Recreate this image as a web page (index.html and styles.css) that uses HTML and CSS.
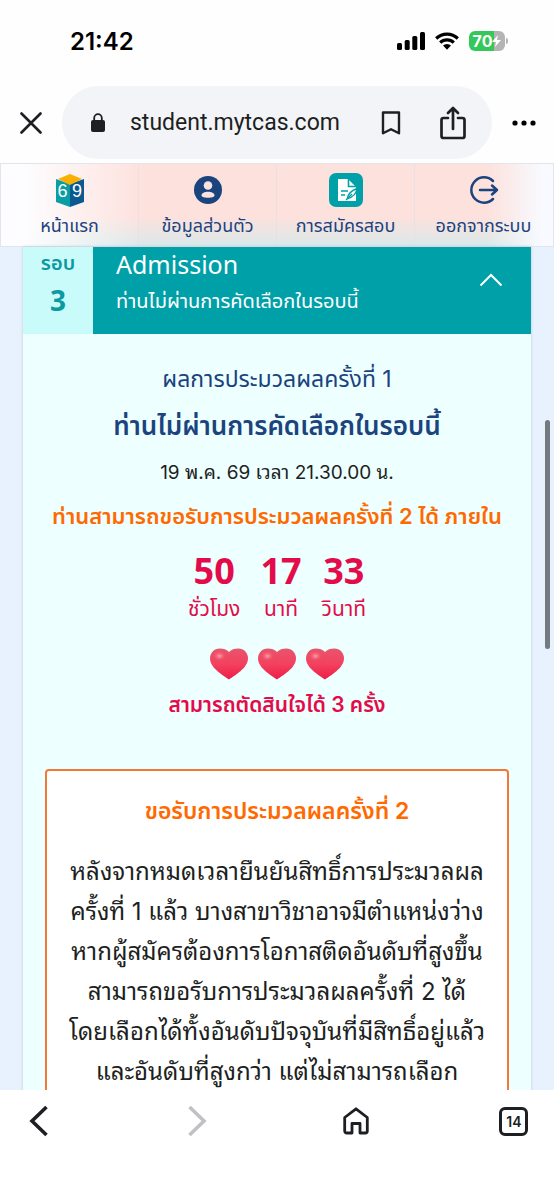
FILE: index.html
```html
<!DOCTYPE html>
<html lang="th">
<head>
<meta charset="utf-8">
<meta name="viewport" content="width=device-width, initial-scale=1">
<title>student.mytcas.com</title>
<link rel="stylesheet" href="styles.css">
</head>
<body>
<div class="app">
  <header class="chrome">
    <div class="status">
      <time class="clock">21:42</time>
      <div class="status-icons">
        <svg width="28" height="18" viewBox="0 0 28 18" aria-hidden="true"><rect x="0" y="11" width="5" height="7" rx="1.5"/><rect x="7.700" y="8" width="5" height="10" rx="1.500"/><rect x="15.300" y="4" width="5" height="14" rx="1.500"/><rect x="23" y="0" width="5" height="18" rx="1.500"/></svg>
        <svg width="24" height="18" viewBox="0 0 24 18" aria-hidden="true"><g fill="none" stroke="#000" stroke-width="3.200"><path d="M1.200 6.500a15.500 15.500 0 0 1 21.600 0"/><path d="M5.200 10.700a9.700 9.700 0 0 1 13.600 0"/></g><path d="M8 13.600a5.700 5.700 0 0 1 8 0L12 17.800z"/></svg>
        <div class="battery">
          <span class="battery-body"><span>70</span><svg width="9" height="12" viewBox="0 0 9 12" aria-hidden="true"><path fill="#fff" d="M6 0 0 7h4L3 12l6-7H5z"/></svg></span>
          <span class="battery-tip"></span>
        </div>
      </div>
    </div>
    <div class="toolbar">
      <button class="tool" aria-label="Close"><svg width="22" height="22" viewBox="0 0 22 22"><path d="M1.500 1.500l19 19M20.500 1.500l-19 19" fill="none" stroke="#1d1f22" stroke-width="2.600" stroke-linecap="round"/></svg></button>
      <div class="address">
        <svg width="16" height="20" viewBox="0 0 16 20" aria-hidden="true"><rect x="1" y="7" width="14" height="12" rx="2" fill="#1d1f22"/><path d="M4.200 8V5a3.800 3.800 0 0 1 7.600 0v3" fill="none" stroke="#1d1f22" stroke-width="1.800"/></svg>
        <span class="url">student.mytcas.com</span>
        <button class="tool" aria-label="Bookmark"><svg width="20" height="24" viewBox="0 0 20 24"><path d="M2 1.500h16v20.700l-8-4-8 4z" fill="none" stroke="#1d1f22" stroke-width="2.400" stroke-linejoin="round"/></svg></button>
        <button class="tool" aria-label="Share"><svg width="26" height="34" viewBox="0 0 26 34"><g fill="none" stroke="#1d1f22" stroke-width="2.700" stroke-linecap="round" stroke-linejoin="round"><path d="M8 12H3.500A2 2 0 0 0 1.500 14v16a2 2 0 0 0 2 2h19a2 2 0 0 0 2-2V14a2 2 0 0 0-2-2H18M13 23V3M8 7l5-5 5 5"/></g></svg></button>
      </div>
      <button class="tool" aria-label="More"><svg width="24" height="6" viewBox="0 0 24 6"><circle cx="3" cy="3" r="2.600"/><circle cx="12" cy="3" r="2.600"/><circle cx="21" cy="3" r="2.600"/></svg></button>
    </div>
  </header>

  <div class="viewport">
    <nav class="nav">
      <a class="nav-item" href="#home">
        <svg width="34" height="34" viewBox="0 0 34 34" aria-hidden="true"><path fill="#089ea3" d="M3 6l14 5v23l-14-5z"/><path fill="#0b5990" d="M31 6l-14 5v23l14-5z"/><path fill="#f9b000" d="M17 1l12 5-12 6L5 6z"/><text class="logo-digit" x="9.500" y="24">6</text><text class="logo-digit" x="24" y="24">9</text></svg>
        <span>หน้าแรก</span>
      </a>
      <a class="nav-item" href="#profile">
        <svg width="34" height="34" viewBox="0 0 34 34" aria-hidden="true"><circle cx="17" cy="17" r="14" fill="#1b437e"/><circle cx="17" cy="12.500" r="4.300" fill="#fde3df"/><path d="M10.500 22.500c0-5 13-5 13 0 0 3-13 3-13 0z" fill="#fde3df"/></svg>
        <span>ข้อมูลส่วนตัว</span>
      </a>
      <a class="nav-item" href="#apply">
        <svg width="34" height="34" viewBox="0 0 34 34" aria-hidden="true"><rect width="34" height="34" rx="7" fill="#00a0a9"/><path fill="#fff" d="M9 6h10l8 8v14H9z"/><path d="M19.500 6v7.500H27" fill="none" stroke="#00a0a9" stroke-width="1.600"/><path d="M12 18h7M12 22h4" stroke="#00a0a9" stroke-width="1.700"/><path d="M18.500 25.500c.500-5 4-8 9.500-10-.500 4-3.500 8.500-9.500 10z" fill="#fff" stroke="#00a0a9" stroke-width="1.500"/><path d="M17 27l6-6" stroke="#00a0a9" stroke-width="1.200"/></svg>
        <span>การสมัครสอบ</span>
      </a>
      <a class="nav-item" href="#logout">
        <svg width="34" height="34" viewBox="0 0 34 34" aria-hidden="true"><g fill="none" stroke="#1b437e" stroke-width="2.500" stroke-linecap="round" stroke-linejoin="round"><path d="M26 8A12.700 12.700 0 1 0 26 26M13 17h16M25 12.500l5 4.500-5 4.500"/></g></svg>
        <span>ออกจากระบบ</span>
      </a>
    </nav>

    <main class="card">
      <button class="round" aria-expanded="true">
        <span class="round-no"><span>รอบ</span><b>3</b></span>
        <span class="round-info"><span class="round-name">Admission</span><span class="round-state">ท่านไม่ผ่านการคัดเลือกในรอบนี้</span></span>
        <svg class="chevron" width="24" height="14" viewBox="0 0 24 14" aria-hidden="true"><path d="M1.500 12.500L12 2l10.500 10.500" fill="none" stroke="#fff" stroke-width="2"/></svg>
      </button>
      <section class="result">
        <p class="result-label">ผลการประมวลผลครั้งที่ 1</p>
        <h1 class="result-title">ท่านไม่ผ่านการคัดเลือกในรอบนี้</h1>
        <p class="result-date">19 พ.ค. 69 เวลา 21.30.00 น.</p>
        <p class="result-offer">ท่านสามารถขอรับการประมวลผลครั้งที่ 2 ได้ ภายใน</p>
        <div class="timer">
          <div class="unit"><b>50</b><span>ชั่วโมง</span></div>
          <div class="unit"><b>17</b><span>นาที</span></div>
          <div class="unit"><b>33</b><span>วินาที</span></div>
        </div>
        <div class="hearts">
          <svg width="38" height="32" viewBox="0 0 38 32" aria-hidden="true"><defs><linearGradient id="heart" x1="0" y1="0" x2="0" y2="1"><stop offset="0" stop-color="#e8566c"/><stop offset=".5" stop-color="#f3415f"/><stop offset="1" stop-color="#ee1c46"/></linearGradient><radialGradient id="shine"><stop offset="0" stop-color="#ffa0a8"/><stop offset="1" stop-color="#f4566f" stop-opacity="0"/></radialGradient></defs><path id="heart-shape" fill="url(#heart)" d="M19 31.500C14 28 0 20 0 10.500 0 4.500 4.500.500 9.500.500c4 0 7.500 1 9.500 3.500 2-2.500 5.500-3.500 9.500-3.500 5 0 9.500 4 9.500 10C38 20 24 28 19 31.500z"/><ellipse cx="9.500" cy="8" rx="6.500" ry="5" fill="url(#shine)"/></svg>
          <svg width="38" height="32" viewBox="0 0 38 32" aria-hidden="true"><use href="#heart-shape"/><ellipse cx="9.500" cy="8" rx="6.500" ry="5" fill="url(#shine)"/></svg>
          <svg width="38" height="32" viewBox="0 0 38 32" aria-hidden="true"><use href="#heart-shape"/><ellipse cx="9.500" cy="8" rx="6.500" ry="5" fill="url(#shine)"/></svg>
        </div>
        <p class="chances">สามารถตัดสินใจได้ 3 ครั้ง</p>
      </section>
      <section class="panel">
        <h2 class="panel-title">ขอรับการประมวลผลครั้งที่ 2</h2>
        <p class="panel-text">หลังจากหมดเวลายืนยันสิทธิ์การประมวลผล<br>ครั้งที่ 1 แล้ว บางสาขาวิชาอาจมีตำแหน่งว่าง<br>หากผู้สมัครต้องการโอกาสติดอันดับที่สูงขึ้น<br>สามารถขอรับการประมวลผลครั้งที่ 2 ได้<br>โดยเลือกได้ทั้งอันดับปัจจุบันที่มีสิทธิ์อยู่แล้ว<br>และอันดับที่สูงกว่า แต่ไม่สามารถเลือก</p>
      </section>
    </main>
    <div class="scrollbar"></div>
  </div>

  <footer class="bottom">
    <button class="tool" aria-label="Back"><svg width="20" height="32" viewBox="0 0 20 32"><path d="M17.500 2L3 16l14.500 14" fill="none" stroke="#1d1f22" stroke-width="3.600"/></svg></button>
    <button class="tool" aria-label="Forward" disabled><svg width="20" height="32" viewBox="0 0 20 32"><path d="M2.500 2L17 16 2.500 30" fill="none" stroke="#bfc1c6" stroke-width="3.600"/></svg></button>
    <button class="tool" aria-label="Home"><svg width="26" height="28" viewBox="0 0 26 28"><path d="M1.700 10.500L13 1.800l11.300 8.700V24a2 2 0 0 1-2 2H17v-9.500H9V26H3.700a2 2 0 0 1-2-2z" fill="none" stroke="#1d1f22" stroke-width="2.800" stroke-linejoin="round"/></svg></button>
    <button class="tool" aria-label="Tabs"><span class="tabs">14</span></button>
  </footer>
</div>
</body>
</html>
```
FILE: styles.css
```css
* { box-sizing: border-box; }
body {
  margin: 0;
  background: #fefefe;
  color: #1d1f22;
  font-family: Inter, "Noto Sans Thai", "Noto Sans", sans-serif;
}
h1, h2, p { margin: 0; }
button { border: 0; padding: 0; background: none; color: inherit; font: inherit; }
svg { display: block; flex: none; }

.app { display: flex; flex-direction: column; height: 100vh; overflow: hidden; }

.chrome { flex: none; padding-bottom: 4px; }
.status {
  display: flex;
  align-items: center;
  justify-content: space-between;
  height: 86px;
  padding: 0 46px 4px 70px;
}
.clock { font-size: 24px; font-weight: 600; color: #000; }
.status-icons { display: flex; align-items: center; gap: 10px; }
.battery { display: flex; align-items: center; gap: 1px; }
.battery-body {
  display: flex;
  align-items: center;
  justify-content: center;
  width: 36px;
  height: 20px;
  border-radius: 6px;
  background: linear-gradient(90deg, #34c759 70%, #b4b4b4 70%);
  color: #fff;
  font-size: 16px;
  font-weight: 700;
}
.battery-tip { width: 2px; height: 6px; border-radius: 0 2px 2px 0; background: #b4b4b4; }

.toolbar { display: flex; align-items: center; gap: 20px; padding: 0 18px 0 20px; }
.tool { display: grid; place-items: center; flex: none; }
.address {
  flex: 1;
  display: flex;
  align-items: center;
  height: 73px;
  padding: 0 26px 0 28px;
  border-radius: 37px;
  background: #f3f4f7;
}
.url { flex: 1; padding-left: 24px; font-family: Roboto, Inter, sans-serif; font-size: 23px; }
.address .tool + .tool { margin-left: 39px; }

.viewport {
  position: relative;
  flex: 1;
  min-height: 0;
  overflow: hidden;
  background: #e8f2fe;
}
.nav {
  display: grid;
  grid-template-columns: repeat(4, 1fr);
  height: 84px;
  border: 1px solid #e3e5ec;
  background:
    linear-gradient(90deg, #fdfdff 4%, rgba(253, 253, 255, 0) 26%, rgba(253, 253, 255, 0) 88%, #f8faff 98%),
    linear-gradient(0deg, rgba(214, 234, 235, .9), rgba(214, 234, 235, 0) 36%),
    #fde1dd;
}
.nav-item {
  display: flex;
  flex-direction: column;
  align-items: center;
  gap: 4px;
  padding-top: 9px;
  border-right: 1px solid rgba(226, 222, 228, .6);
  color: #1b437e;
  font-size: 18px;
  line-height: 30px;
  text-decoration: none;
  white-space: nowrap;
}
.nav-item:last-child { border-right-color: transparent; }
.logo-digit { fill: #fff; font-family: "Liberation Sans Narrow", "Liberation Sans", sans-serif; font-size: 18px; text-anchor: middle; }

.card { margin: 0 23px; background: #edfffe; box-shadow: 0 0 3px rgba(60, 90, 130, .25); }
.round {
  display: flex;
  align-items: stretch;
  width: 100%;
  height: 87px;
  background: #00a0a9;
  color: #fff;
  text-align: left;
}
.round-no {
  display: flex;
  flex-direction: column;
  align-items: center;
  width: 70px;
  background: #cafbfb;
  color: #0b9aa0;
  font-size: 20px;
  font-weight: 600;
  line-height: 32px;
}
.round-no b { font: 700 28px/42px "Noto Sans", sans-serif; }
.round-info { flex: 1; display: flex; flex-direction: column; padding-left: 23px; }
.round-name { font: 25px/34px "Noto Sans", "Open Sans", sans-serif; }
.round-state { font-size: 20px; line-height: 40px; white-space: nowrap; }
.chevron { margin: 26px 28px 0 0; }

.result { padding-top: 24px; color: #1b437e; text-align: center; white-space: nowrap; }
.result-label { font-size: 23px; line-height: 42px; }
.result-title { font-size: 26px; font-weight: 600; line-height: 52px; }
.result-date, .panel-text { font-family: Inter, "Noto Sans Thai Looped", "Noto Looped Thai", Loma, Waree, "Noto Sans Thai", sans-serif; }
.result-date { color: #1d1f22; font-size: 19px; line-height: 42px; }
.result-offer { color: #ff6900; font-size: 22px; font-weight: 600; line-height: 44px; }
.timer { display: flex; justify-content: center; gap: 20px; padding-top: 10px; color: #e30b49; }
.unit { display: flex; flex-direction: column; align-items: center; font-size: 21px; line-height: 30px; }
.unit b { font: 700 36px/46px "Noto Sans", sans-serif; }
.hearts { display: flex; justify-content: center; gap: 10px; padding-top: 24px; }
.chances { padding-top: 4px; color: #e30b49; font-size: 21px; font-weight: 600; line-height: 42px; }

.panel {
  margin: 43px 22px 0;
  height: 500px;
  border: 2px solid #f07a35;
  border-radius: 4px;
  background: #fff;
  text-align: center;
  white-space: nowrap;
}
.panel-title { padding-top: 18px; color: #ff6900; font-size: 23px; font-weight: 600; line-height: 44px; }
.panel-text { padding-top: 19px; font-size: 24px; line-height: 40px; }

.scrollbar {
  position: absolute;
  top: 257px;
  right: 4px;
  width: 5px;
  height: 229px;
  border-radius: 3px;
  background: #737a80;
}

.bottom {
  flex: none;
  display: flex;
  justify-content: space-between;
  align-items: flex-start;
  height: 110px;
  padding: 15px 25px 0 24px;
  background: #fff;
}
.bottom .tool { width: 30px; height: 32px; }
.tabs {
  display: grid;
  place-items: center;
  width: 29px;
  height: 29px;
  border: 3px solid #1d1f22;
  border-radius: 6px;
  font-size: 14px;
  font-weight: 600;
}
```
